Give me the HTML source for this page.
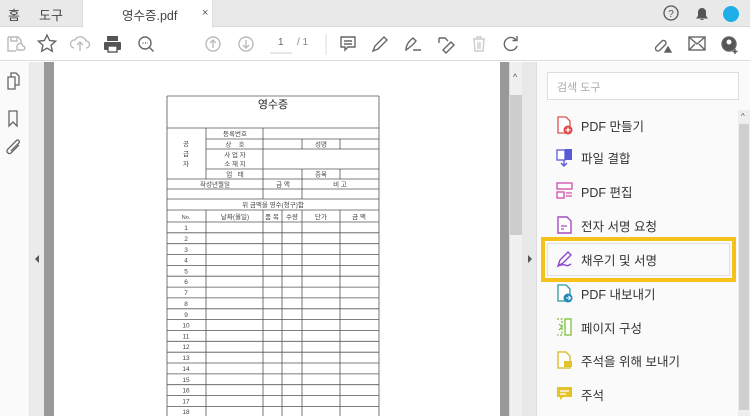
<!DOCTYPE html>
<html><head><meta charset="utf-8"><style>
*{margin:0;padding:0;box-sizing:border-box}
body{width:750px;height:416px;overflow:hidden;position:relative;background:#fff;font-family:"Liberation Sans","Noto Sans CJK KR",sans-serif;color:#333}
.a{position:absolute}
.item{position:absolute;left:556px;font-size:12.5px;color:#333;display:flex;align-items:center;height:20px}
.item svg{margin-right:8px}
</style></head><body>
<!-- tab bar -->
<div class="a" style="left:0;top:0;width:750px;height:27px;background:#e9e9e9;border-bottom:1px solid #d8d8d8"></div>
<div class="a" style="left:82px;top:0;width:131px;height:28px;background:#fff;border-left:1px solid #ddd;border-right:1px solid #ddd"></div>
<div class="a" style="left:8px;top:5px;font-size:13px;color:#444">홈</div>
<div class="a" style="left:39px;top:5px;font-size:13px;color:#444">도구</div>
<div class="a" style="left:122px;top:5px;font-size:12.5px;color:#444">영수증.pdf</div>
<div class="a" style="left:202px;top:7px;font-size:11px;color:#555">×</div>
<svg class="a" style="left:662px;top:4px" width="80" height="20">
<circle cx="9" cy="9" r="7" fill="none" stroke="#555" stroke-width="1.3"/><text x="9" y="13" font-size="10" text-anchor="middle" fill="#555" font-family="Liberation Sans">?</text>
<path d="M35 14h10l-1.5-2v-4a3.5 3.5 0 0 0-7 0v4z M38.5 15.5h3" fill="#555" stroke="#555"/>
<circle cx="69" cy="10" r="8" fill="#1eaee8"/>
</svg>
<!-- toolbar -->
<div class="a" style="left:0;top:28px;width:750px;height:33px;background:#fff;border-bottom:1px solid #ddd"></div>
<svg class="a" style="left:0;top:28px" width="750" height="33" fill="none" stroke="#666" stroke-width="1.4">
<path d="M8 9h10l3 3v4 M8 9v14h8 M11 9v4h6v-4" stroke="#bbb"/><path d="M17 22h6a2 2 0 0 0 0-4a3 3 0 0 0-6 1z" stroke="#bbb"/>
<path d="M47 7l2.6 5.5 6 .7-4.5 4 1.2 6-5.3-3-5.3 3 1.2-6-4.5-4 6-.7z"/>
<path d="M74 20a4 4 0 0 1 1-8a6 6 0 0 1 11 1a3.5 3.5 0 0 1 0 7 M80 23v-9 M77 17l3-3 3 3" stroke="#bbb"/>
<rect x="104" y="14" width="17" height="8" rx="1" fill="#555" stroke="none"/><rect x="107" y="8" width="11" height="5" fill="#555" stroke="none"/><rect x="108" y="18" width="9" height="6" fill="#fff" stroke="#555"/>
<circle cx="145" cy="15" r="6"/><path d="M149.5 19.5l4 4"/><path d="M142.5 15h1 M145 15h1 M147.5 15h0.5"/>
<circle cx="213" cy="16" r="7" stroke="#bbb"/><path d="M213 20v-8 M210 15l3-3 3 3" stroke="#bbb"/>
<circle cx="246" cy="16" r="7" stroke="#bbb"/><path d="M246 12v8 M243 17l3 3 3-3" stroke="#bbb"/>
<path d="M270 25h22" stroke="#ccc" stroke-width="1"/>
<path d="M326 6v21" stroke="#ddd" stroke-width="1"/>
<path d="M341 9h14v10h-7l-3 3v-3h-4z M344 13h8 M344 16h8"/>
<path d="M373 23l2-5 9-9 3 3-9 9z"/>
<path d="M406 22c0-5 3-9 7-12l3 3c-3 4-7 7-10 9z M413 22h8" />
<path d="M439 10h6l3 3 M439 10v5 M443 22l8-8 3 3-8 8z"/>
<path d="M473 11h12 M477 11v-2h4v2 M474 11l1 12h8l1-12 M478 14v7 M480 14v7" stroke="#ccc"/>
<path d="M516 12a6.5 6.5 0 1 0 1 6 M517 8v4.5h-4.5"/>
<path d="M656 19l6-6a2.5 2.5 0 0 1 3.5 3.5l-6 6a2.5 2.5 0 0 1-3.5-3.5z"/><path d="M665 24l3-5 3 5z" fill="#555"/>
<rect x="689" y="9" width="16" height="13"/><path d="M689 9l8 7 8-7 M689 22l6-6 M705 22l-6-6"/>
<circle cx="729" cy="16" r="7" fill="#555"/><circle cx="729" cy="14" r="2.5" fill="#fff" stroke="none"/><path d="M735 21v5 M732.5 23.5h5" stroke="#555"/>
</svg>
<div class="a" style="left:278px;top:37px;font-size:10px;color:#666">1</div>
<div class="a" style="left:297px;top:37px;font-size:10px;color:#888">/ 1</div>
<!-- left pane -->
<div class="a" style="left:0;top:62px;width:30px;height:354px;background:#fafafa;border-right:1px solid #e4e4e4"></div>
<svg class="a" style="left:0;top:65px" width="30" height="100" fill="none" stroke="#666" stroke-width="1.3">
<path d="M8 12h7v12h-7z M11 12v-4h5l3 3v9h-4"/>
<path d="M9 46v15l4-4 4 4v-15z"/>
<path d="M19 80l-8 8a2.5 2.5 0 0 1-3.5-3.5l9-9a1.7 1.7 0 0 1 2.4 2.4l-8 8"/>
</svg>
<div class="a" style="left:30px;top:62px;width:14px;height:354px;background:#ebebeb"></div>
<div class="a" style="left:35px;top:255px;width:0;height:0;border-top:4px solid transparent;border-bottom:4px solid transparent;border-right:4px solid #555"></div>
<div class="a" style="left:44px;top:62px;width:10px;height:354px;background:#999"></div>
<div class="a" style="left:500px;top:62px;width:9px;height:354px;background:#999"></div>
<div class="a" style="left:509px;top:62px;width:13px;height:354px;background:#f0f0f0;border-left:1px solid #ddd"></div>
<div class="a" style="left:510px;top:95px;width:12px;height:140px;background:#cdcdcd"></div>
<div class="a" style="left:513px;top:72px;font-size:9px;color:#555">^</div>
<div class="a" style="left:522px;top:62px;width:15px;height:354px;background:#e8e8e8;border-right:1px solid #ddd"></div>
<div class="a" style="left:528px;top:255px;width:0;height:0;border-top:4px solid transparent;border-bottom:4px solid transparent;border-left:4px solid #555"></div>
<!-- document -->
<svg class="a" style="left:0;top:0" width="500" height="416" font-family="Liberation Sans, Noto Sans CJK KR, sans-serif" fill="#444">
<g stroke="#555" stroke-width="0.8" fill="none">
<path d="M167 96v320 M379 96v320 M167 96h212 M167 128h212"/>
<path d="M206 139h173 M206 149h173 M206 169h173 M167 179h212 M167 189h212 M167 199h212 M167 210h212 M167 222h212"/>
<path d="M206 128v51 M263 128v51 M302 139v10 M340 139v10 M302 169v10 M340 169v10 M263 179v20 M302 179v20"/>
<path d="M206 210v206 M263 210v206 M282 210v206 M302 210v206 M340 210v206"/>
<path d="M167 232.8h212 M167 243.7h212 M167 254.5h212 M167 265.4h212 M167 276.2h212 M167 287.1h212 M167 297.9h212 M167 308.8h212 M167 319.6h212 M167 330.5h212 M167 341.3h212 M167 352.2h212 M167 363h212 M167 373.9h212 M167 384.7h212 M167 395.6h212 M167 406.4h212"/>
</g>
<text x="273" y="108" font-size="11" text-anchor="middle" fill="#222">영수증</text>
<g font-size="6.5" text-anchor="middle">
<text x="235" y="136">등록번호</text><text x="235" y="146.5">상 &#160; &#160;호</text><text x="321" y="146.5">성명</text>
<text x="235" y="157">사 업 자</text><text x="235" y="166">소 재 지</text>
<text x="235" y="176.5">업 &#160; 태</text><text x="321" y="176.5">종목</text>
<text x="186" y="146">공</text><text x="186" y="156">급</text><text x="186" y="166">자</text>
<text x="215" y="186.5">작성년월일</text><text x="283" y="186.5">금 액</text><text x="340" y="186.5">비 고</text>
<text x="273" y="207">위 금액을 영수(청구)함</text>
<text x="186" y="219" font-size="5.5">No.</text><text x="235" y="219">날짜(월일)</text><text x="272" y="219">품 목</text><text x="292" y="219">수량</text><text x="321" y="219">단가</text><text x="359" y="219">금 액</text>
<text x="186" y="230">1</text><text x="186" y="241">2</text><text x="186" y="252">3</text><text x="186" y="262.5">4</text><text x="186" y="273.5">5</text><text x="186" y="284">6</text><text x="186" y="295">7</text><text x="186" y="306">8</text><text x="186" y="317">9</text><text x="186" y="327.5">10</text><text x="186" y="338.5">11</text><text x="186" y="349">12</text><text x="186" y="360">13</text><text x="186" y="371">14</text><text x="186" y="382">15</text><text x="186" y="392.5">16</text><text x="186" y="403.5">17</text><text x="186" y="414">18</text>
</g>
</svg>
<!-- right pane -->
<div class="a" style="left:537px;top:62px;width:213px;height:354px;background:#fafafa"></div>
<div class="a" style="left:547px;top:72px;width:192px;height:28px;background:#fff;border:1px solid #ddd;font-size:11px;color:#aaa;padding:6px 9px">검색 도구</div>
<div class="a" style="left:738px;top:110px;width:12px;height:306px;background:#eee"></div>
<div class="a" style="left:739px;top:124px;width:10px;height:286px;background:#cfcfcf"></div>
<div class="a" style="left:741px;top:112px;font-size:8px;color:#555">^</div>
<div class="a" style="left:541px;top:237px;width:195px;height:45px;border:4px solid #f6c21a;background:#fafafa"><div style="margin:2px;height:33px;border:1px solid #e0e0e0"></div></div>
<div class="item" style="top:115px"><svg width="17" height="20"><path d="M2 2h8l4 4v12h-12z" fill="#fff" stroke="#d9534f" stroke-width="1.3"/><circle cx="12" cy="15" r="4.5" fill="#e04848"/><path d="M12 12.5v5 M9.5 15h5" stroke="#fff" stroke-width="1.3"/></svg>PDF 만들기</div>
<div class="item" style="top:147px"><svg width="17" height="20"><rect x="1" y="3" width="8" height="10" fill="#fff" stroke="#5a5ad8" stroke-width="1.3"/><rect x="9" y="2" width="7" height="11" fill="#5a5ad8"/><path d="M8 13v6 M5 16l3 3 3-3" stroke="#5a5ad8" stroke-width="1.4" fill="none"/></svg>파일 결합</div>
<div class="item" style="top:181px"><svg width="17" height="20"><rect x="1" y="2" width="15" height="6" fill="#fff" stroke="#d24caa" stroke-width="1.3"/><rect x="1" y="11" width="7" height="6" fill="#fff" stroke="#d24caa" stroke-width="1.3"/><path d="M10 12h6 M10 15h6" stroke="#d24caa" stroke-width="1.2"/></svg>PDF 편집</div>
<div class="item" style="top:215px"><svg width="17" height="20"><path d="M2 2h9l4 4v12h-13z" fill="#fff" stroke="#a44cc4" stroke-width="1.4"/><path d="M5 11h6 M5 14h3" stroke="#a44cc4" stroke-width="1.2"/></svg>전자 서명 요청</div>
<div class="item" style="top:249px"><svg width="17" height="20"><path d="M2 17l2-6 8-8 3 3-8 8z M2 17c3-1 5-2 7-1s3 1 6-1" fill="none" stroke="#8a4ad0" stroke-width="1.4"/></svg>채우기 및 서명</div>
<div class="item" style="top:283px"><svg width="17" height="20"><path d="M2 2h8l4 4v12h-12z" fill="#fff" stroke="#2b9a9a" stroke-width="1.3"/><circle cx="12" cy="15" r="4.5" fill="#2489b8"/><path d="M10 15h4 M12.5 13l2 2-2 2" stroke="#fff" stroke-width="1.1" fill="none"/></svg>PDF 내보내기</div>
<div class="item" style="top:317px"><svg width="17" height="20"><rect x="9" y="2" width="6" height="16" fill="#fff" stroke="#7cbf3c" stroke-width="1.3"/><path d="M1 2h5v16h-5" fill="none" stroke="#7cbf3c" stroke-width="1.3" stroke-dasharray="2 1.5"/><path d="M3 7l3 3-3 3" fill="none" stroke="#7cbf3c" stroke-width="1.2"/></svg>페이지 구성</div>
<div class="item" style="top:350px"><svg width="17" height="20"><path d="M2 2h8l4 4v12h-12z" fill="#fff" stroke="#d8b820" stroke-width="1.3"/><rect x="8" y="11" width="8" height="6" fill="#e2c32a"/></svg>주석을 위해 보내기</div>
<div class="item" style="top:384px"><svg width="17" height="20"><path d="M1 3h15v10h-9l-3 3v-3h-3z" fill="#e2c32a"/><path d="M4 7h9 M4 10h6" stroke="#fff" stroke-width="1.2"/></svg>주석</div>
</body></html>
